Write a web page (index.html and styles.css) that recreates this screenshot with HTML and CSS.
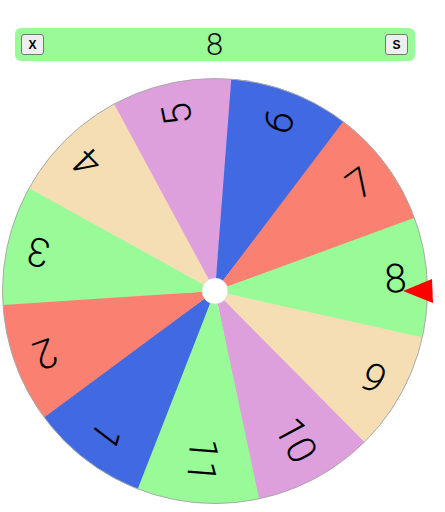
FILE: index.html
```html
<!DOCTYPE html>
<html lang="en">
<head>
    <meta charset="UTF-8">
    <meta name="viewport" content="width=device-width, initial-scale=1.0">
    <title>Spin the Wheel</title>
    <link rel="stylesheet" href="styles.css">
</head>
<body>

    <div class="bar">
        <button class="bar-btn" id="close-btn">X</button>
        <span class="result">8</span>
        <button class="bar-btn" id="spin-btn">S</button>
    </div>

    <!-- wheel: center at (0,0), each slice is rotated into place -->
    <svg class="wheel" width="445" height="436" viewBox="-215 -215 445 436">
        <defs>
            <path id="slice" d="M0 0 L203.6 -60.9 A212.5 212.5 0 0 1 203.6 60.9 Z"/>
        </defs>
        <g transform="rotate(-232.59)"><use href="#slice" class="c-blue"/><text x="192" y="-1">1</text></g>
        <g transform="rotate(-199.86)"><use href="#slice" class="c-salmon"/><text x="192" y="-1">2</text></g>
        <g transform="rotate(-167.14)"><use href="#slice" class="c-green"/><text x="192" y="-1">3</text></g>
        <g transform="rotate(-134.41)"><use href="#slice" class="c-wheat"/><text x="192" y="-1">4</text></g>
        <g transform="rotate(-101.68)"><use href="#slice" class="c-plum"/><text x="192" y="-1">5</text></g>
        <g transform="rotate(-68.95)"><use href="#slice" class="c-blue"/><text x="192" y="-1">6</text></g>
        <g transform="rotate(-36.23)"><use href="#slice" class="c-salmon"/><text x="192" y="-1">7</text></g>
        <g transform="rotate(-3.5)"><use href="#slice" class="c-green"/><text x="192" y="-1">8</text></g>
        <g transform="rotate(29.23)"><use href="#slice" class="c-wheat"/><text x="192" y="-1">9</text></g>
        <g transform="rotate(61.95)"><use href="#slice" class="c-plum"/><text x="192" y="-1">10</text></g>
        <g transform="rotate(94.68)"><use href="#slice" class="c-green"/><text x="192" y="-1">11</text></g>
        <circle class="rim" cx="0" cy="0" r="212.5"/>
        <circle class="hub" cx="0" cy="0" r="13"/>
        <polygon class="pointer" points="188,0 217,-12 218,12"/>
    </svg>

</body>
</html>
```

FILE: styles.css
```css
body {
    font-family: "Liberation Sans", Arial, sans-serif;
    background-color: #ffffff;
    color: #000;
    margin: 0;
}
.bar {
    width: 400px;
    height: 33px;
    margin: 28px 0 0 15px;
    padding: 0 7px 0 6px;
    box-sizing: border-box;
    background-color: #98fb98;
    border-radius: 6px;
    display: flex;
    align-items: center;
    justify-content: space-between;
}
.bar-btn {
    width: 23px;
    height: 21px;
    padding: 0;
    font-family: "Liberation Sans", Arial, sans-serif;
    font-size: 12px;
    font-weight: bold;
    color: #000;
    background-color: #efefef;
    border: 1px solid #767676;
    border-radius: 3px;
}
.result {
    font-family: Roboto, "Liberation Sans", sans-serif;
    font-size: 31px;
    line-height: 1;
    font-weight: 300;
    color: #111;
}
.wheel {
    display: block;
    margin-top: 15px;
}
.wheel text {
    font-family: Roboto, "Liberation Sans", sans-serif;
    font-size: 40px;
    font-weight: 300;
    fill: #000;
    text-anchor: end;
    dominant-baseline: central;
}
.c-blue { fill: #4169e1; }
.c-salmon { fill: #fa8072; }
.c-green { fill: #98fb98; }
.c-wheat { fill: #f5deb3; }
.c-plum { fill: #dda0dd; }
.rim {
    fill: none;
    stroke: #aaa;
    stroke-width: 1;
}
.hub {
    fill: #fff;
    stroke: #ccc;
    stroke-width: 0.5;
}
.pointer {
    fill: #ff0000;
}
```
